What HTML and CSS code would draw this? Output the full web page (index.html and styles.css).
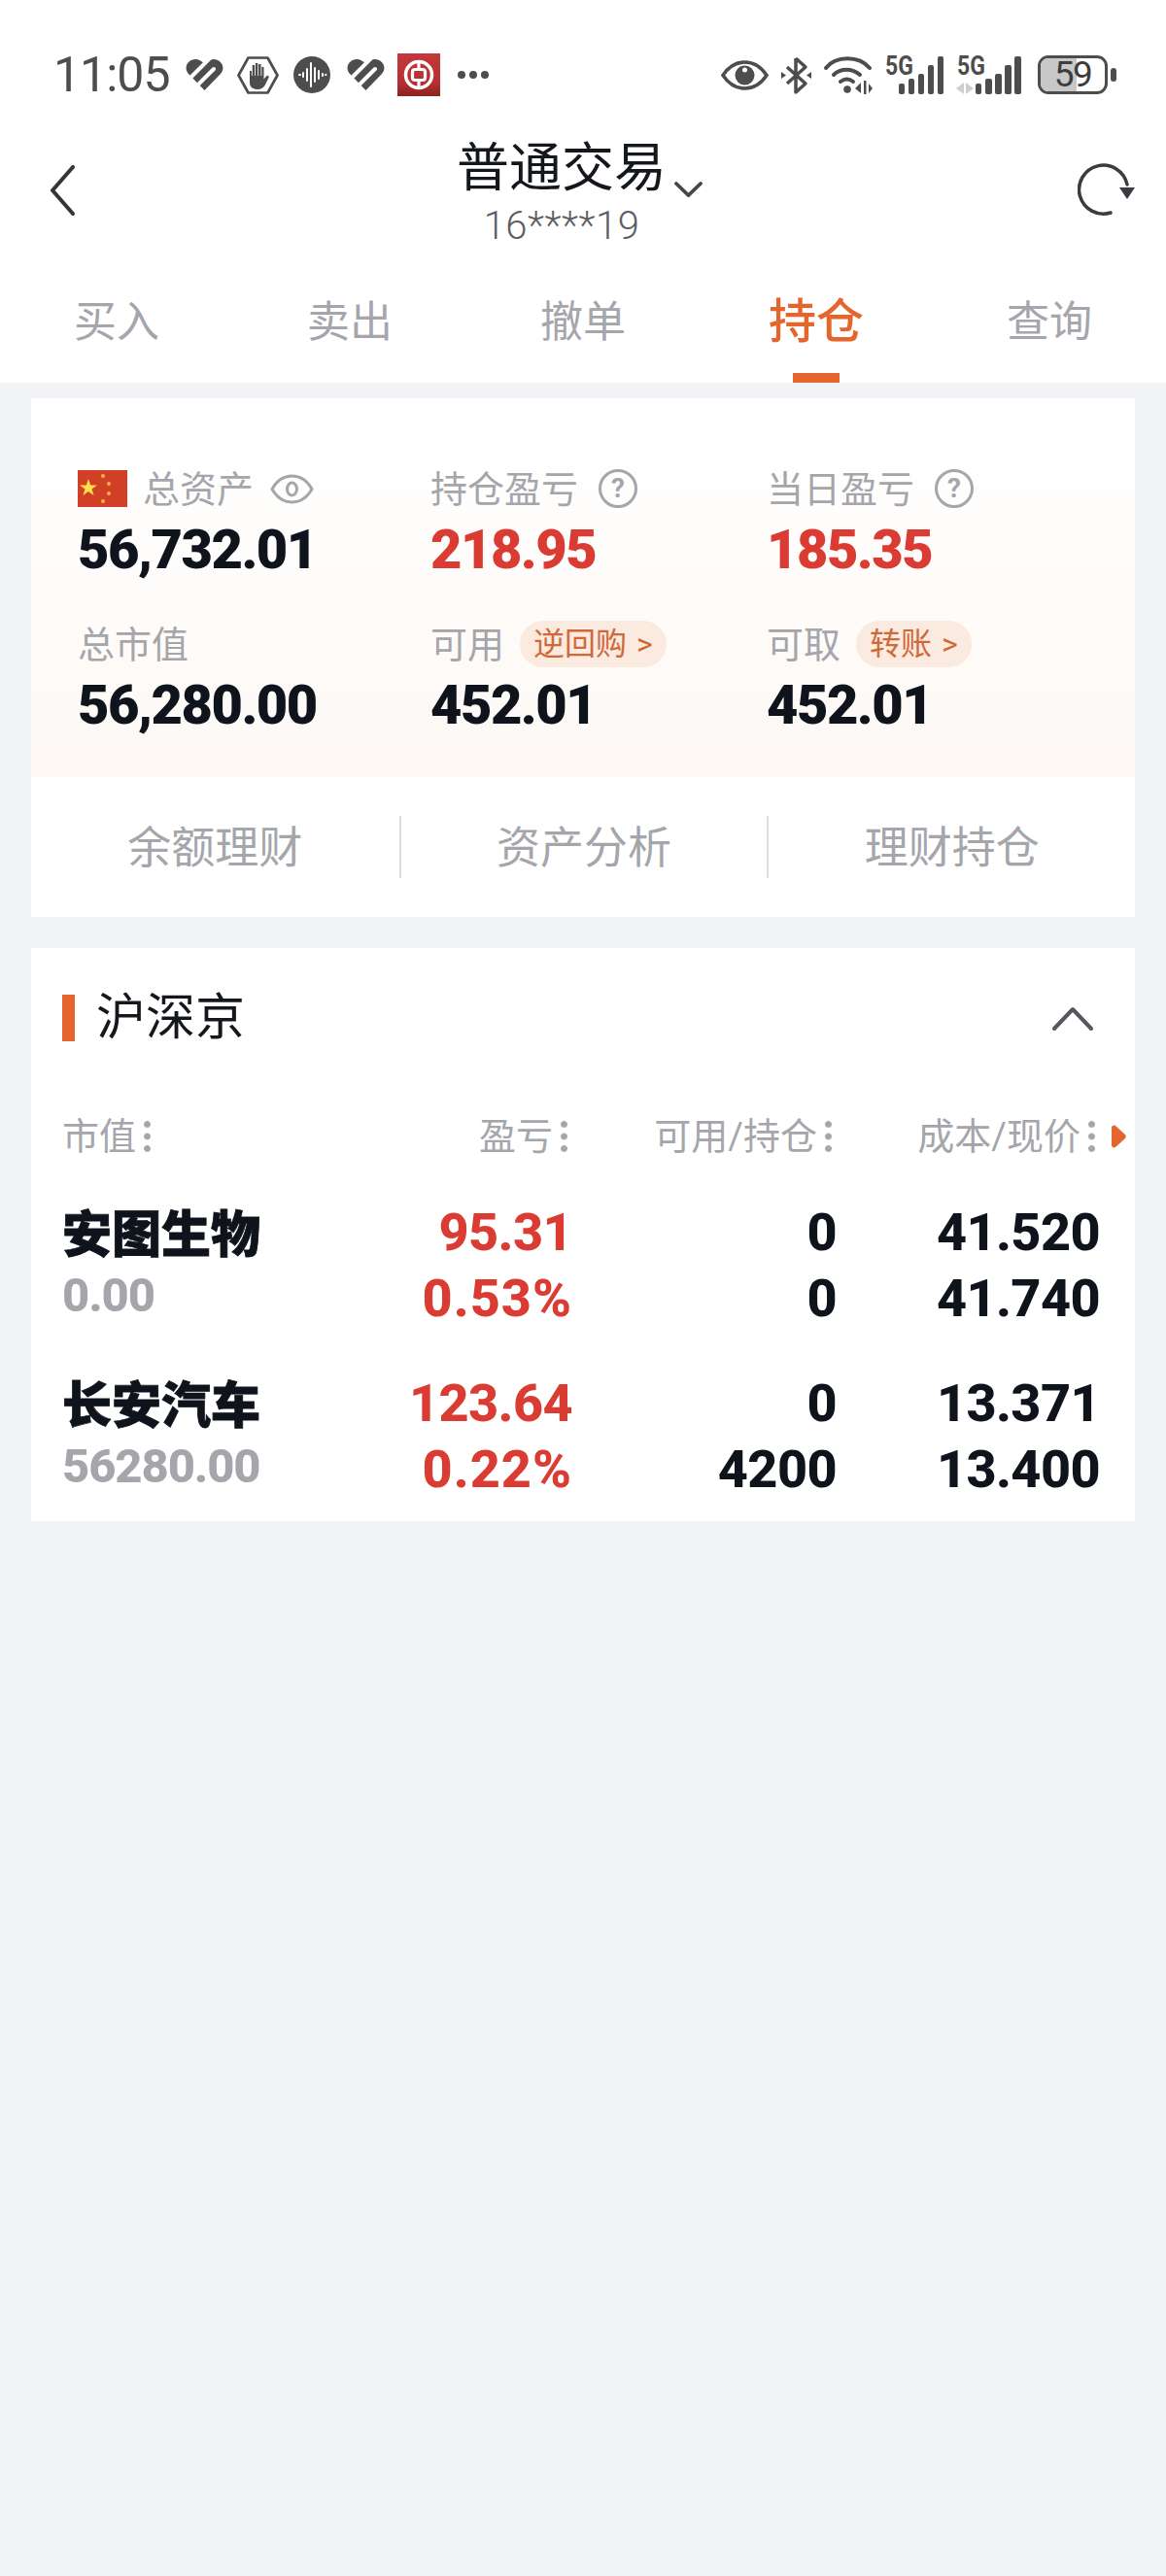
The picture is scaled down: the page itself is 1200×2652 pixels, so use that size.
FILE: index.html
```html
<!DOCTYPE html>
<html lang="zh-CN">
<head>
<meta charset="utf-8">
<title>普通交易</title>
<link rel="stylesheet" href="styles.css">
</head>
<body>
<div class="app">
  <header class="top">
    <div class="status">
      <span class="time">11:05</span>
      <svg class="heart" viewBox="0 0 39 32"><path d="M19.500 32 3 15C-3 8 3 0 10 0c4 0 7 2 9.500 5C22 2 25 0 29 0c7 0 13 8 7 15Z" fill="#4d4d4d"/><path d="M27-3 5 19M29 10 8 31" stroke="#fff" stroke-width="4" stroke-linecap="round" fill="none"/></svg>
      <svg class="hand" viewBox="0 0 43 39"><path d="M11.500 1.500h20L41.500 19.500l-10 18h-20l-10-18Z" fill="none" stroke="#4d4d4d" stroke-width="2.700" stroke-linejoin="round"/><path d="M13 15v12c0 5 4 7 8 7s7-2 8.500-6l3.500-7-2-1.500-3.500 4V11h-2.200v9h-.8V8h-2.400v12h-.8V7h-2.400v13h-.8V9h-2.400v11h-.8v-5Z" fill="#4d4d4d"/></svg>
      <svg class="sound" viewBox="0 0 38 38"><circle cx="19" cy="19" r="19" fill="#4d4d4d"/><path d="M6 19h1M10 17v4M14 13v12M18 7v24M22 12v14M26 15v8M30 18v2M33 19h.5" stroke="#fff" stroke-width="2" stroke-linecap="round"/></svg>
      <svg class="heart heart2" viewBox="0 0 39 32"><path d="M19.500 32 3 15C-3 8 3 0 10 0c4 0 7 2 9.500 5C22 2 25 0 29 0c7 0 13 8 7 15Z" fill="#4d4d4d"/><path d="M27-3 5 19M29 10 8 31" stroke="#fff" stroke-width="4" stroke-linecap="round" fill="none"/></svg>
      <svg class="boc" viewBox="0 0 44 44"><defs><linearGradient id="bocg" x1="0" y1="0" x2="0" y2="1"><stop offset="0" stop-color="#c43a3c"/><stop offset=".7" stop-color="#b62f31"/><stop offset="1" stop-color="#8e1f1f"/></linearGradient></defs><rect width="44" height="44" fill="url(#bocg)"/><circle cx="22" cy="22" r="13.500" fill="none" stroke="#fff" stroke-width="3.500"/><rect x="15.500" y="16.500" width="13" height="11" rx="2.500" fill="none" stroke="#fff" stroke-width="3.200"/><path d="M22 8v8M22 28v8" stroke="#fff" stroke-width="3.200"/></svg>
      <span class="more"><i></i><i></i><i></i></span>
      <svg class="eye" viewBox="0 0 49 31"><path d="M2 15.500C9 5 17 2 24.500 2S40 5 47 15.500C40 26 32 29 24.500 29S9 26 2 15.500Z" fill="none" stroke="#4d4d4d" stroke-width="3.500"/><circle cx="24.500" cy="15.500" r="10" fill="#4d4d4d"/><circle cx="24.500" cy="10" r="2.500" fill="#fff"/></svg>
      <svg class="bt" viewBox="0 0 31 41"><path d="M15 3v35l10-9L6 12M15 3l10 9L6 29" fill="none" stroke="#4d4d4d" stroke-width="3.500" stroke-linejoin="round"/><path d="m0 17 5 3.500L0 24ZM31 17l-5 3.500L31 24Z" fill="#4d4d4d"/></svg>
      <svg class="wifi" viewBox="0 0 51 40"><path d="M3 13C13 0 37 0 48 13M11 20c7-7 19-7 27 0M18 27c4-3 9-3 13 0" fill="none" stroke="#4d4d4d" stroke-width="4" stroke-linecap="round"/><circle cx="25" cy="35" r="3.800" fill="#4d4d4d"/><path d="m39 28-6 6 6 5ZM42 26h2.500v14H42ZM47 29v10l4-5Z" fill="#4d4d4d"/></svg>
      <div class="sig sig1">
        <span class="g5">5G</span>
        <svg viewBox="0 0 61 40"><rect x="15" y="29" width="6" height="11" rx="2" fill="#4d4d4d"/><rect x="25" y="24" width="6" height="16" rx="2" fill="#4d4d4d"/><rect x="35" y="19" width="6" height="21" rx="2" fill="#4d4d4d"/><rect x="45" y="10" width="6" height="30" rx="2" fill="#4d4d4d"/><rect x="55" y="1" width="6" height="39" rx="2" fill="#4d4d4d"/></svg>
      </div>
      <div class="sig sig2">
        <span class="g5">5G</span>
        <svg viewBox="0 0 67 40"><path d="M0 34 8 28v12ZM10 28l8 6-8 6Z" fill="#cfcfcf"/><rect x="20" y="29" width="6" height="11" rx="2" fill="#4d4d4d"/><rect x="30" y="24" width="7" height="16" rx="2" fill="#4d4d4d"/><rect x="40" y="19" width="7" height="21" rx="2" fill="#4d4d4d"/><rect x="50" y="10" width="7" height="30" rx="2" fill="#4d4d4d"/><rect x="60" y="1" width="7" height="39" rx="2" fill="#4d4d4d"/></svg>
      </div>
      <div class="batt"><span class="level"></span><span class="batt-num">59</span></div>
      <span class="nub"></span>
    </div>
    <div class="title">
      <svg class="back" viewBox="0 0 28 52"><path d="M25 2 4 26l21 24" fill="none" stroke="#333538" stroke-width="4" stroke-linecap="round" stroke-linejoin="round"/></svg>
      <div class="title-mid">
        <div class="title-row"><span class="title-text">普通交易</span><svg class="caret" viewBox="0 0 29 16"><path d="m2 2 12.500 12L27 2" fill="none" stroke="#45474d" stroke-width="3.800" stroke-linecap="round"/></svg></div>
        <div class="acct">16****19</div>
      </div>
      <svg class="refresh" viewBox="0 0 61 54"><path d="M34 51A25 25 0 1 1 51 22" fill="none" stroke="#3a3c41" stroke-width="3.500" stroke-linecap="round"/><path d="M43 25h16l-8 12Z" fill="#3a3c41"/></svg>
    </div>
    <nav class="tabs">
      <span class="tab">买入</span>
      <span class="tab">卖出</span>
      <span class="tab">撤单</span>
      <span class="tab on">持仓</span>
      <span class="tab">查询</span>
    </nav>
  </header>

  <section class="card assets">
    <div class="grad">
      <div class="cell">
        <div class="lab"><svg class="flag" viewBox="0 0 51 38"><rect width="51" height="38" fill="#d23f27"/><path d="m11 9 2.200 6.500H20l-5.500 4 2.100 6.500-5.600-4-5.600 4 2.100-6.500-5.500-4h6.800Z" fill="#fbe14b"/><circle cx="26" cy="6" r="2" fill="#f1b63c"/><circle cx="32" cy="14" r="2" fill="#f1b63c"/><circle cx="32" cy="24" r="2" fill="#f1b63c"/><circle cx="26" cy="32" r="2" fill="#f1b63c"/></svg><span class="lt">总资产</span><svg class="ico-eye" viewBox="0 0 45 31"><path d="M2 15.500C8 5 16 2 22.500 2S37 5 43 15.500C37 26 29 29 22.500 29S8 26 2 15.500Z" fill="none" stroke="#a4a6ab" stroke-width="3"/><ellipse cx="22.500" cy="15.500" rx="5" ry="6.500" fill="none" stroke="#a4a6ab" stroke-width="3"/></svg></div>
        <div class="big">56,732.01</div>
      </div>
      <div class="cell">
        <div class="lab"><span class="lt">持仓盈亏</span><span class="q">?</span></div>
        <div class="big red">218.95</div>
      </div>
      <div class="cell">
        <div class="lab"><span class="lt">当日盈亏</span><span class="q">?</span></div>
        <div class="big red">185.35</div>
      </div>
      <div class="cell">
        <div class="lab"><span class="lt">总市值</span></div>
        <div class="big">56,280.00</div>
      </div>
      <div class="cell">
        <div class="lab"><span class="lt">可用</span><span class="pill">逆回购 &gt;</span></div>
        <div class="big">452.01</div>
      </div>
      <div class="cell">
        <div class="lab"><span class="lt">可取</span><span class="pill">转账 &gt;</span></div>
        <div class="big">452.01</div>
      </div>
    </div>
    <div class="links">
      <span class="link">余额理财</span>
      <span class="link">资产分析</span>
      <span class="link">理财持仓</span>
    </div>
  </section>

  <section class="card holdings">
    <div class="sect">
      <span class="mark"></span>
      <span class="sect-name">沪深京</span>
      <svg class="up" viewBox="0 0 42 25"><path d="m2 23 19-20 19 20" fill="none" stroke="#56585d" stroke-width="4" stroke-linecap="round" stroke-linejoin="round"/></svg>
    </div>
    <div class="row head">
      <span class="h c1">市值<i class="dots"></i></span>
      <span class="h c2">盈亏<i class="dots"></i></span>
      <span class="h c3">可用/持仓<i class="dots"></i></span>
      <span class="h c4">成本/现价<i class="dots"></i></span>
      <svg class="more-col" viewBox="0 0 16 24"><path d="M1 3c0-2 2-3 4-2l10 9c1 1 1 3 0 4L5 23c-2 1-4 0-4-2Z" fill="#e4662c"/></svg>
    </div>
    <div class="row stock">
      <div class="c1"><div class="name">安图生物</div><div class="mv">0.00</div></div>
      <div class="c2 red"><div>95.31</div><div class="pct">0.53%</div></div>
      <div class="c3"><div>0</div><div>0</div></div>
      <div class="c4"><div>41.520</div><div>41.740</div></div>
    </div>
    <div class="row stock">
      <div class="c1"><div class="name">长安汽车</div><div class="mv">56280.00</div></div>
      <div class="c2 red"><div>123.64</div><div class="pct">0.22%</div></div>
      <div class="c3"><div>0</div><div>4200</div></div>
      <div class="c4"><div>13.371</div><div>13.400</div></div>
    </div>
  </section>
</div>
</body>
</html>
```
FILE: styles.css
```css
* { box-sizing: border-box; }
html, body { margin: 0; padding: 0; }
body {
  width: 1200px;
  height: 2652px;
  background: #f2f3f7;
  font-family: "Roboto", "Noto Sans CJK SC", sans-serif;
  color: #0f141c;
  overflow: hidden;
}
.app { display: flex; flex-direction: column; }

.top { background: #fff; height: 394px; display: flex; flex-direction: column; }

.status { height: 142px; padding: 55px 51px 43px 55px; display: flex; align-items: center; }
.time { width: 118px; font-size: 50px; line-height: 44px; letter-spacing: -1px; color: #4d4d4d; white-space: nowrap; }
.heart { width: 39px; height: 32px; margin-left: 18px; }
.heart2 { margin-left: 17px; }
.hand { width: 43px; height: 39px; margin-left: 14px; }
.sound { width: 38px; height: 38px; margin-left: 15px; }
.boc { width: 44px; height: 44px; margin-left: 13px; }
.more { display: flex; gap: 4px; margin-left: 18px; margin-right: auto; }
.more i { width: 8px; height: 8px; border-radius: 50%; background: #4d4d4d; }
.eye { width: 49px; height: 31px; }
.bt { width: 31px; height: 41px; margin-left: 13px; }
.wifi { width: 51px; height: 40px; margin-left: 12px; }
.sig { position: relative; height: 40px; }
.sig1 { width: 61px; margin-left: 12px; }
.sig2 { width: 67px; margin-left: 13px; }
.sig svg { width: 100%; height: 40px; display: block; }
.g5 { position: absolute; left: 1px; top: 1px; font-size: 28px; line-height: 20px; font-weight: 700; color: #4d4d4d; transform: scaleX(.82); transform-origin: left; }
.batt { position: relative; width: 72px; height: 40px; margin-left: 17px; border: 3.500px solid #4d4d4d; border-radius: 11px; display: flex; align-items: center; justify-content: center; }
.level { position: absolute; left: 0; top: 0; bottom: 0; width: 37px; border-radius: 8px 0 0 8px; background: #c8c8c8; }
.batt-num { position: relative; font-size: 37px; line-height: 30px; letter-spacing: -1.500px; color: #3d3d3d; }
.nub { width: 6px; height: 14px; border-radius: 3px; background: #4d4d4d; margin-left: 3px; }

.title { height: 100px; display: flex; align-items: flex-start; }
.back { width: 28px; height: 52px; margin: 28px 0 0 50px; }
.title-mid { margin-left: 392px; display: flex; flex-direction: column; }
.title-row { display: flex; align-items: flex-end; }
.title-text { font-size: 54px; line-height: 64px; color: #14171c; }
.caret { width: 29px; height: 16px; margin: 0 0 3px 8px; }
.acct { width: 216px; margin-top: 6px; font-size: 40px; line-height: 42px; letter-spacing: .5px; color: #5c5e63; font-weight: 300; text-align: center; }
.refresh { width: 61px; height: 54px; margin: 26px 30px 0 auto; }

.tabs { height: 152px; display: flex; }
.tab { position: relative; flex: 1 1 0; font-size: 44px; line-height: 54px; padding-top: 63px; text-align: center; color: #a4a6ab; }
.tab.on { color: #e4662c; font-weight: 500; font-size: 49px; }
.tab.on::after { content: ""; position: absolute; left: 50%; bottom: 0; width: 48px; height: 10px; margin-left: -24px; background: #e4662c; }

.card { margin: 16px 32px 0; background: #fff; }
.assets { height: 534px; }
.grad { height: 390px; padding: 72px 0 0 48px; display: grid; grid-template-columns: 363px 346px 1fr; grid-auto-rows: 160px; background: linear-gradient(#fff 0, #fff 40px, #fdf8f4 390px); }
.lab { display: flex; align-items: center; height: 42px; font-size: 38px; color: #a4a6ab; }
.lt { padding-bottom: 5px; }
.flag { width: 51px; height: 38px; margin-right: 16px; }
.ico-eye { width: 45px; height: 31px; margin-left: 17px; }
.q { width: 40px; height: 40px; margin-left: 21px; border: 3px solid #a4a6ab; border-radius: 50%; font-size: 28px; line-height: 34px; text-align: center; font-weight: 700; }
.big { margin-top: 14px; font-size: 56px; line-height: 56px; font-weight: 900; letter-spacing: -1.5px; color: #0f141c; }
.red { color: #da3c33 !important; }
.pill { margin-left: 16px; height: 48px; padding: 0 14px; border-radius: 24px; background: #fbeadf; color: #d0693a; font-size: 32px; line-height: 48px; word-spacing: 2px; white-space: nowrap; }

.links { height: 144px; display: grid; grid-template-columns: repeat(3, 1fr); align-items: center; }
.link { height: 64px; line-height: 68px; text-align: center; font-size: 45px; color: #a4a6ab; }
.link + .link { border-left: 2px solid #dcdde0; }

.holdings { margin-top: 32px; height: 590px; }
.sect { height: 144px; margin-bottom: 20px; display: flex; align-items: center; padding: 0 43px 0 32px; }
.mark { width: 13px; height: 48px; background: #e4662c; }
.sect-name { margin-left: 22px; flex: 1; font-size: 51px; line-height: 60px; color: #14171c; }
.up { width: 42px; height: 25px; }

.row { position: relative; display: grid; grid-template-columns: 202px 323px 272px 271px; padding-left: 32px; }
.head { height: 60px; align-items: center; }
.h { display: flex; align-items: center; justify-content: flex-end; padding-right: 5px; font-size: 38px; line-height: 44px; color: #a4a6ab; white-space: nowrap; }
.h.c1 { justify-content: flex-start; }
.dots { flex: none; width: 7px; height: 32px; margin-left: 8px; background: radial-gradient(circle at 3.500px 3.500px, #a4a6ab 3px, transparent 3.800px) 0 0 / 7px 12.500px repeat-y; }
.more-col { position: absolute; left: 1111px; top: 18px; width: 16px; height: 24px; }

.stock { height: 176px; padding-top: 35px; font-size: 54px; line-height: 68px; font-weight: 800; letter-spacing: -0.6px; color: #0f141c; text-align: right; }
.stock .c1 { text-align: left; letter-spacing: 0; }
.pct { letter-spacing: 1px; }
.name { font-family: "Noto Sans CJK SC", sans-serif; font-weight: 900; font-size: 51px; line-height: 64px; white-space: nowrap; -webkit-text-stroke: .8px #0f141c; }
.mv { margin-top: 10px; font-size: 49px; line-height: 50px; font-weight: 800; letter-spacing: -1.1px; color: #a4a6ab; }
```
